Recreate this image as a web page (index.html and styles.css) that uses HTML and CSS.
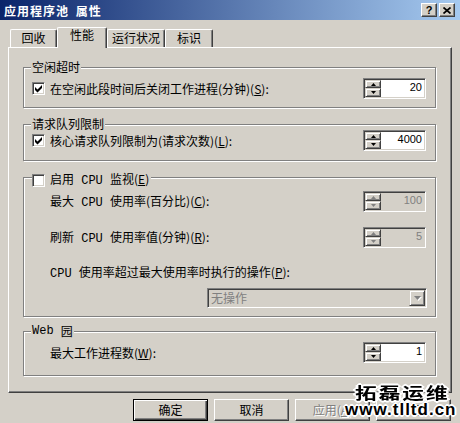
FILE: index.html
```html
<!DOCTYPE html>
<html>
<head>
<meta charset="utf-8">
<link rel="stylesheet" href="styles.css">
</head>
<body>
<div class="dlg">
  <div class="titlebar">
    <span class="title">应用程序池 属性</span>
    <div class="tbtns">
      <span class="tbtn">?</span>
      <span class="tbtn"><svg width="8" height="7" viewBox="0 0 8 7"><path d="M0.5 0.5 L7.5 6.5 M7.5 0.5 L0.5 6.5" stroke="#000" stroke-width="1.7" fill="none"/></svg></span>
    </div>
  </div>

  <div class="tabs">
    <div class="tab w1">回收</div>
    <div class="tab w2 sel">性能</div>
    <div class="tab w3">运行状况</div>
    <div class="tab w4">标识</div>
  </div>

  <div class="panel">
    <div class="group g1">
      <div class="legend">空闲超时</div>
      <div class="row">
        <div class="chk">
          <span class="box"><svg width="7" height="8" viewBox="0 0 7 8"><polygon points="0,2 2.5,4.5 7,0 7,3 2.5,7.5 0,5" fill="#000"/></svg></span>
          <span>在空闲此段时间后关闭工作进程(分钟)(<u>S</u>):</span>
        </div>
        <div class="spin">
          <div class="arrows">
            <span class="ab up"><svg width="5" height="3" viewBox="0 0 5 3"><path d="M2.5 0 L5 3 L0 3Z"/></svg></span>
            <span class="ab dn"><svg width="5" height="3" viewBox="0 0 5 3"><path d="M0 0 L5 0 L2.5 3Z"/></svg></span>
          </div>
          <span class="val">20</span>
        </div>
      </div>
    </div>

    <div class="group g2">
      <div class="legend">请求队列限制</div>
      <div class="row">
        <div class="chk">
          <span class="box"><svg width="7" height="8" viewBox="0 0 7 8"><polygon points="0,2 2.5,4.5 7,0 7,3 2.5,7.5 0,5" fill="#000"/></svg></span>
          <span>核心请求队列限制为(请求次数)(<u>L</u>):</span>
        </div>
        <div class="spin">
          <div class="arrows">
            <span class="ab up"><svg width="5" height="3" viewBox="0 0 5 3"><path d="M2.5 0 L5 3 L0 3Z"/></svg></span>
            <span class="ab dn"><svg width="5" height="3" viewBox="0 0 5 3"><path d="M0 0 L5 0 L2.5 3Z"/></svg></span>
          </div>
          <span class="val">4000</span>
        </div>
      </div>
    </div>

    <div class="group g3">
      <div class="legend leg-chk">
        <span class="box"></span>
        <span class="leg-text">启用<span class="lat"> CPU </span>监视(<u>E</u>)</span>
      </div>
      <div class="row">
        <span>最大<span class="lat"> CPU </span>使用率(百分比)(<u>C</u>):</span>
        <div class="spin dis">
          <div class="arrows">
            <span class="ab up"><svg width="5" height="3" viewBox="0 0 5 3"><path d="M2.5 0 L5 3 L0 3Z"/></svg></span>
            <span class="ab dn"><svg width="5" height="3" viewBox="0 0 5 3"><path d="M0 0 L5 0 L2.5 3Z"/></svg></span>
          </div>
          <span class="val">100</span>
        </div>
      </div>
      <div class="row r2">
        <span>刷新<span class="lat"> CPU </span>使用率值(分钟)(<u>R</u>):</span>
        <div class="spin dis">
          <div class="arrows">
            <span class="ab up"><svg width="5" height="3" viewBox="0 0 5 3"><path d="M2.5 0 L5 3 L0 3Z"/></svg></span>
            <span class="ab dn"><svg width="5" height="3" viewBox="0 0 5 3"><path d="M0 0 L5 0 L2.5 3Z"/></svg></span>
          </div>
          <span class="val">5</span>
        </div>
      </div>
      <div class="lbl3"><span class="lat">CPU </span>使用率超过最大使用率时执行的操作(<u>P</u>):</div>
      <div class="combo-row">
        <div class="combo">
          <span class="ctxt">无操作</span>
          <span class="cbtn"><svg width="7" height="4" viewBox="0 0 7 4"><path d="M0 0 L7 0 L3.5 4Z" fill="#808080"/></svg></span>
        </div>
      </div>
    </div>

    <div class="group g4">
      <div class="legend"><span class="lat">Web </span>园</div>
      <div class="row">
        <span>最大工作进程数(<u>W</u>):</span>
        <div class="spin">
          <div class="arrows">
            <span class="ab up"><svg width="5" height="3" viewBox="0 0 5 3"><path d="M2.5 0 L5 3 L0 3Z"/></svg></span>
            <span class="ab dn"><svg width="5" height="3" viewBox="0 0 5 3"><path d="M0 0 L5 0 L2.5 3Z"/></svg></span>
          </div>
          <span class="val">1</span>
        </div>
      </div>
    </div>
  </div>

  <div class="btns">
    <div class="btn def">确定</div>
    <div class="btn">取消</div>
    <div class="btn dis">应用(<u>A</u>)</div>
    <div class="btn">帮助</div>
  </div>

  <div class="wm wm1">拓磊运维</div>
  <div class="wm wm2">www.tlltd.cn</div>
</div>
</body>
</html>
```

FILE: styles.css
```css
* { box-sizing: border-box; }
html, body { margin: 0; padding: 0; }
body {
  width: 460px;
  height: 423px;
  overflow: hidden;
  background: #d4d0c8;
  font-family: "Noto Sans CJK SC", "Noto Sans", sans-serif;
  font-size: 12px;
  color: #000;
}
u { text-underline-offset: 1px; }
.lat { font-family: "Liberation Mono", monospace; font-size: 12px; white-space: pre; }
.dlg { position: relative; width: 460px; height: 423px; }

/* title bar */
.titlebar {
  height: 20px;
  display: flex;
  align-items: center;
  justify-content: space-between;
  padding: 0 5px 0 4px;
  background: linear-gradient(to right, #0a246a, #a6caf0);
}
.title { color: #fff; font-weight: 700; line-height: 14px; margin-top: 1px; letter-spacing: 1px; word-spacing: 3px; }
.tbtns { display: flex; gap: 2px; }
.tbtn {
  width: 16px; height: 14px;
  background: #d4d0c8;
  border: 1px solid; border-color: #fff #404040 #404040 #fff;
  box-shadow: inset -1px -1px #808080;
  display: flex; align-items: center; justify-content: center;
  font: 700 11px/12px "Liberation Sans", sans-serif;
  color: #000;
}

/* tabs */
.tabs { height: 27px; display: flex; align-items: flex-end; padding-left: 10px; }
.tab {
  height: 18px;
  border: 1px solid; border-bottom: 0;
  border-color: #fff #404040 #fff #fff;
  box-shadow: inset -1px 0 #808080;
  border-radius: 2px 2px 0 0;
  background: #d4d0c8;
  text-align: center;
  line-height: 16px;
}
.w1 { width: 47px; }
.w2 { width: 50px; }
.w3 { width: 58px; }
.w4 { width: 48px; }
.tab.sel { height: 21px; margin-bottom: -1px; line-height: 14px; position: relative; z-index: 1; }

/* panel */
.panel {
  margin-left: 8px;
  width: 444px;
  height: 346px;
  border: 1px solid; border-color: #fff #404040 #404040 #fff;
  box-shadow: inset -1px -1px #808080;
  padding: 19px 14px 0 14px;
}
.group {
  position: relative;
  margin-right: 1px;
  border: 1px solid #808080;
  box-shadow: inset 1px 1px #fff, 1px 1px #fff;
}
.g1 { height: 41px; padding: 10px 9px 0 8px; }
.g2 { height: 37px; margin-top: 16px; padding: 5px 9px 0 8px; }
.g3 { height: 140px; margin-top: 16px; padding: 13px 9px 0 26px; }
.g4 { height: 45px; margin-top: 14px; padding: 10px 9px 0 26px; }

.legend {
  position: absolute;
  top: -8px; left: 7px;
  padding: 0 1px;
  background: #d4d0c8;
  line-height: 14px;
  display: flex; align-items: center;
}
.legend.leg-chk { top: -6px; left: 8px; padding: 0 2px 0 0; gap: 5px; }

.row { display: flex; align-items: center; justify-content: space-between; height: 21px; line-height: 14px; }
.r2 { margin-top: 15px; }
.lbl3 { margin-top: 17px; line-height: 14px; }
.chk { display: flex; align-items: center; gap: 5px; }

.box {
  width: 13px; height: 13px; flex: none;
  background: #fff;
  border: 1px solid; border-color: #808080 #fff #fff #808080;
  box-shadow: inset 1px 1px #404040, inset -1px -1px #d4d0c8;
  display: flex; align-items: center; justify-content: center;
}
.box svg { display: block; }

/* spin edit */
.spin {
  width: 63px; height: 21px;
  background: #fff;
  border: 1px solid; border-color: #808080 #fff #fff #808080;
  box-shadow: inset 1px 1px #404040, inset -1px -1px #d4d0c8;
  padding: 1px;
  display: flex;
}
.arrows { width: 16px; display: flex; flex-direction: column; }
.ab {
  background: #d4d0c8;
  border: 1px solid; border-color: #d4d0c8 #404040 #404040 #d4d0c8;
  box-shadow: inset 1px 1px #fff, inset -1px -1px #808080;
  display: flex; align-items: center; justify-content: center;
}
.ab svg { display: block; fill: #000; }
.up { height: 8px; }
.dn { height: 9px; }
.val {
  flex: 1;
  text-align: right;
  padding: 1px 2px 0 0;
  font: 11px/13px "Liberation Sans", sans-serif;
}
.spin.dis { background: #d4d0c8; }
.spin.dis .val { color: #808080; }
.spin.dis .ab svg { fill: #808080; }

/* combo */
.combo-row { display: flex; justify-content: flex-end; margin-top: 7px; margin-right: -1px; }
.combo {
  width: 220px; height: 20px;
  background: #d4d0c8;
  border: 1px solid; border-color: #808080 #fff #fff #808080;
  box-shadow: inset 1px 1px #404040, inset -1px -1px #d4d0c8;
  padding: 1px;
  display: flex;
}
.ctxt { flex: 1; color: #808080; line-height: 16px; padding-left: 2px; }
.cbtn {
  width: 16px; height: 16px;
  background: #d4d0c8;
  border: 1px solid; border-color: #d4d0c8 #404040 #404040 #d4d0c8;
  box-shadow: inset 1px 1px #fff, inset -1px -1px #808080;
  display: flex; align-items: center; justify-content: center;
}
.cbtn svg { display: block; filter: drop-shadow(1px 1px 0 #fff); }

/* buttons */
.btns { display: flex; gap: 6px; padding-left: 133px; margin-top: 6px; }
.btn {
  width: 75px; height: 22px;
  border: 1px solid; border-color: #fff #404040 #404040 #fff;
  box-shadow: inset -1px -1px #808080;
  display: flex; align-items: center; justify-content: center;
  line-height: 14px;
}
.btn.def {
  border-color: #000;
  box-shadow: inset 1px 1px #fff, inset -1px -1px #404040, inset -2px -2px #808080;
}
.btn.dis { color: #808080; text-shadow: 1px 1px #fff; }

/* watermark */
.wm {
  position: absolute;
  color: #000;
  white-space: nowrap;
  text-shadow: -1px -1px #fff, 1px -1px #fff, -1px 1px #fff, 1px 1px #fff,
               0 -1px #fff, 0 1px #fff, -1px 0 #fff, 1px 0 #fff,
               2px 0 #fff, -2px 0 #fff, 0 2px #fff, 0 -2px #fff;
}
.wm1 {
  left: 355px; top: 384px;
  font: 700 16px/16px "Noto Sans CJK SC", sans-serif;
  letter-spacing: 1.5px;
  transform: scaleX(1.35);
  transform-origin: 0 0;
}
.wm2 {
  left: 345px; top: 401px;
  font: 700 17px/17px "Liberation Sans", sans-serif;
  letter-spacing: 1px;
}
```
